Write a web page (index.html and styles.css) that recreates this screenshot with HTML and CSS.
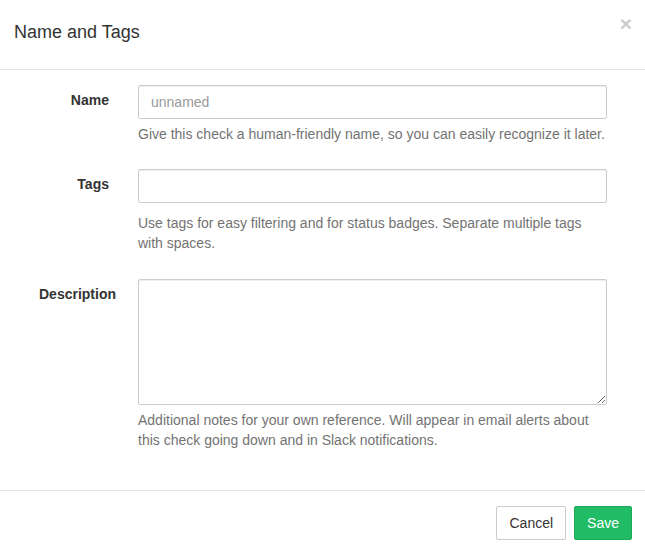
FILE: index.html
```html
<!DOCTYPE html>
<html lang="en">
<head>
<meta charset="utf-8">
<title>Name and Tags</title>
<link rel="stylesheet" href="styles.css">
</head>
<body>
<div class="modal">
  <div class="modal-header">
    <h4 class="modal-title">Name and Tags</h4>
    <button type="button" class="close" aria-label="Close">&times;</button>
  </div>
  <form class="modal-body">
    <div class="form-group group-name">
      <label class="control-label" for="name">Name</label>
      <div class="control">
        <input id="name" class="form-control" type="text" placeholder="unnamed">
        <p class="help-block">Give this check a human-friendly name, so you can easily recognize it later.</p>
      </div>
    </div>
    <div class="form-group group-tags">
      <label class="control-label" for="tags">Tags</label>
      <div class="control">
        <input id="tags" class="form-control" type="text">
        <p class="help-block help-tags">Use tags for easy filtering and for status badges. Separate multiple tags with spaces.</p>
      </div>
    </div>
    <div class="form-group group-desc">
      <label class="control-label" for="desc">Description</label>
      <div class="control">
        <textarea id="desc" class="form-control textarea"></textarea>
        <p class="help-block">Additional notes for your own reference. Will appear in email alerts about this check going down and in Slack notifications.</p>
      </div>
    </div>
  </form>
  <div class="modal-footer">
    <button type="button" class="btn btn-default">Cancel</button>
    <button type="button" class="btn btn-primary">Save</button>
  </div>
</div>
</body>
</html>
```

FILE: styles.css
```css
* { box-sizing: border-box; }

html, body {
  margin: 0;
  padding: 0;
  background: #fff;
}

body {
  font-family: "Liberation Sans", Arial, sans-serif;
  font-size: 14px;
  line-height: 20px;
  color: #333;
}

.modal {
  width: 645px;
  background: #fff;
}

.modal-header {
  display: flex;
  justify-content: space-between;
  align-items: flex-start;
  padding: 18px 14px 23px 14px;
  border-bottom: 1px solid #e5e5e5;
}

.modal-title {
  margin: 0;
  font-size: 18px;
  font-weight: normal;
  line-height: 28px;
  color: #333;
}

.close {
  margin-top: -5px;
  margin-right: -1px;
  padding: 0;
  border: 0;
  background: transparent;
  font-family: "Liberation Sans", Arial, sans-serif;
  font-size: 21px;
  font-weight: bold;
  line-height: 1;
  color: #000;
  opacity: 0.2;
  cursor: pointer;
}

.modal-body {
  display: block;
  margin: 0;
  padding: 15px 38px 15px 39px;
}

.form-group {
  display: grid;
  grid-template-columns: 70px 469px;
  column-gap: 29px;
  margin-bottom: 15px;
}

.control-label {
  display: block;
  padding-top: 5px;
  text-align: right;
  font-weight: bold;
  white-space: nowrap;
  color: #333;
}

.form-control {
  display: block;
  width: 100%;
  height: 34px;
  margin: 0;
  padding: 6px 12px;
  font-family: "Liberation Sans", Arial, sans-serif;
  font-size: 14px;
  line-height: 20px;
  color: #555;
  background: #fff;
  border: 1px solid #ccc;
  border-radius: 2px;
  box-shadow: inset 0 1px 1px rgba(0, 0, 0, 0.075);
}

.form-control::placeholder {
  color: #999;
}

.textarea {
  height: 126px;
  resize: vertical;
}

.help-block {
  margin: 5px 0 10px;
  color: #737373;
}

.help-tags {
  margin-top: 10px;
  margin-bottom: 11px;
}

.modal-footer {
  display: flex;
  justify-content: flex-end;
  gap: 8px;
  padding: 15px 13px 15px 15px;
  border-top: 1px solid #e5e5e5;
}

.btn {
  display: inline-block;
  height: 34px;
  padding: 6px 12px;
  font-family: "Liberation Sans", Arial, sans-serif;
  font-size: 14px;
  line-height: 20px;
  border: 1px solid transparent;
  border-radius: 2px;
  cursor: pointer;
}

.btn-default {
  color: #333;
  background: #fff;
  border-color: #ccc;
}

.btn-primary {
  color: #fff;
  background: #22bc66;
  border-color: #1ea85b;
}
```
